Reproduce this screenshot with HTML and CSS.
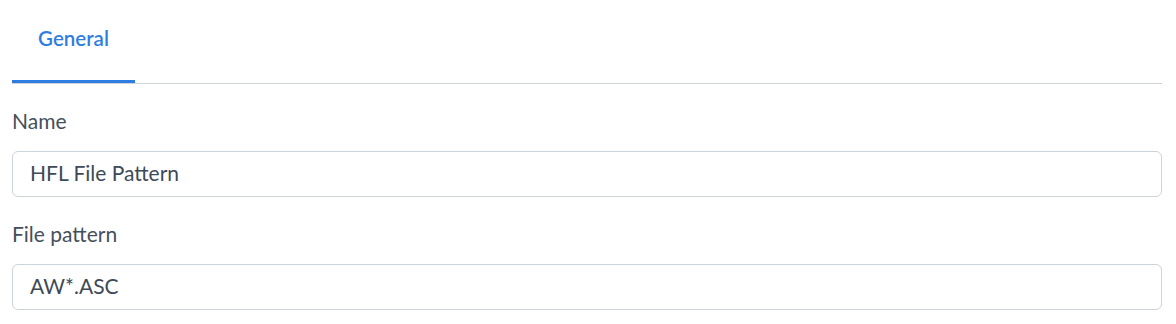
FILE: index.html
```html
<!DOCTYPE html>
<html>
  <head>
    <meta charset="UTF-8" />
    <link rel="stylesheet" href="styles.css">
  </head>

  <body>
    <div class="settings-page">
      <nav class="tabs">
        <a class="tab active" href="#">General</a>
      </nav>

      <div class="tab-panel">
        <div class="form-group">
          <label for="name">Name</label>
          <input id="name" type="text" class="input-field" value="HFL File Pattern" autocomplete="off" />
        </div>

        <div class="form-group">
          <label for="pattern">File pattern</label>
          <input id="pattern" type="text" class="input-field" value="AW*.ASC" autocomplete="off" />
        </div>
      </div>
    </div>
  </body>
</html>
```

FILE: styles.css
```css
body {
  margin: 0;
  background: white;
}
.settings-page {
  padding: 0 14px 0 12px;
  font-family: Lato, 'Open Sans', sans-serif;
  color: #454f5b;
}
.tabs {
  display: flex;
  border-bottom: 1px solid #cdd3da;
}
.tab {
  display: block;
  width: 123px;
  box-sizing: border-box;
  text-align: center;
  padding: 25px 0 28px;
  line-height: 27px;
  font-size: 20.5px;
  font-weight: 600;
  color: #2f7de1;
  text-decoration: none;
  border-bottom: 3px solid transparent;
}
.tab.active {
  border-bottom-color: #2f7de1;
}
.tab-panel {
  display: flex;
  flex-direction: column;
  gap: 24px;
  padding-top: 24px;
}
.form-group label {
  display: block;
  font-size: 21px;
  line-height: 26px;
  margin-bottom: 17px;
}
.input-field {
  display: block;
  width: 100%;
  box-sizing: border-box;
  height: 46px;
  padding: 0 17px 3px;
  border: 1px solid #cdd3da;
  border-radius: 6px;
  font-family: inherit;
  font-size: 21px;
  color: #3e4a56;
  background: white;
  outline: none;
}
```
